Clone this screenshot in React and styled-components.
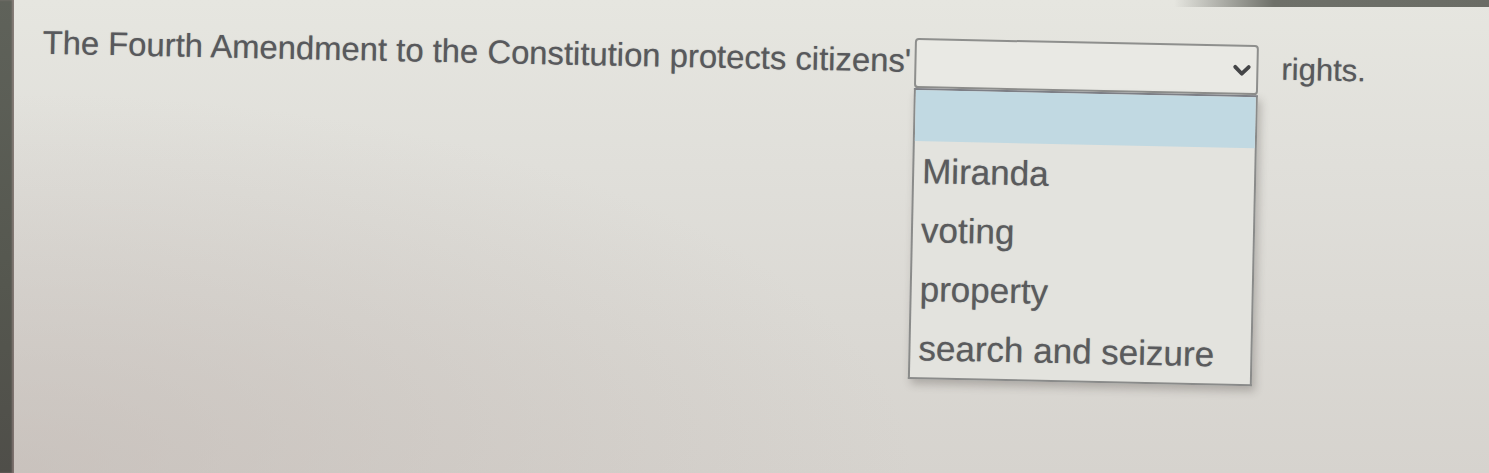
import React from 'react'
import styled, { createGlobalStyle } from 'styled-components'
import { ChevronDown } from 'lucide-react'

const Global = createGlobalStyle`
  html, body {
    margin: 0;
    padding: 0;
    background: #d9d6d1;
  }
  body {
    font-family: "Liberation Sans", Arial, sans-serif;
  }
`

const Page = styled.div`
  display: flex;
  width: 1489px;
  height: 473px;
  overflow: hidden;
`

const Bezel = styled.div`
  flex: 0 0 14px;
  background: linear-gradient(to bottom, #5f625a 0%, #55574f 60%, #4f4e49 100%);
  box-shadow: inset -2px 0 2px rgba(200, 170, 170, 0.4);
`

const Screen = styled.div`
  flex: 1;
  overflow: hidden;
  background:
    linear-gradient(to right, rgba(105, 108, 100, 0) 1160px, #6e7069 1260px, #6a6c65 100%) top / 100% 7px no-repeat,
    radial-gradient(ellipse 900px 380px at 0% 100%, rgba(190, 180, 175, 0.55), rgba(190, 180, 175, 0) 100%),
    linear-gradient(to bottom, #e6e6e0 0%, #e0dfda 35%, #d6d3ce 100%);
`

const Content = styled.div`
  padding: 38px 0 0 29px;
  transform: rotate(1.2deg);
  transform-origin: 901px 38px;
`

const Row = styled.div`
  display: flex;
  align-items: flex-start;
`

const Prompt = styled.span`
  width: 866px;
  margin-right: 6px;
  white-space: nowrap;
  font-size: 32.8px;
  line-height: 50px;
  margin-top: -2px;
  color: #58595c;
  text-shadow: 0 0 1px rgba(90, 90, 95, 0.6);
`

const SelectWrap = styled.div`
  position: relative;
  width: 344px;
`

const SelectBox = styled.div`
  box-sizing: border-box;
  height: 50px;
  border: 2px solid #8e8f8d;
  border-radius: 4px;
  background: #e9e9e4;
  display: flex;
  align-items: center;
  justify-content: flex-end;
  padding-right: 1px;
  color: #444547;
`

const Listbox = styled.ul`
  position: absolute;
  top: 50px;
  left: 0;
  width: 344px;
  box-sizing: border-box;
  margin: 0;
  padding: 0;
  list-style: none;
  background: #e3e3de;
  border: 2px solid #8a8b8a;
  border-top-color: #7d7f86;
  box-shadow: 3px 5px 8px rgba(60, 55, 50, 0.28);
`

const Option = styled.li`
  height: ${p => (p.$blank ? '51px' : '59px')};
  line-height: 59px;
  padding-left: 8px;
  font-size: 35px;
  color: #5a5b5d;
  text-shadow: 0 0 1px rgba(90, 90, 95, 0.6);
  background: ${p => (p.$active ? '#c1d9e2' : 'transparent')};
  white-space: nowrap;
`

const Tail = styled.span`
  margin-left: 23px;
  font-size: 31px;
  line-height: 50px;
  margin-top: -1px;
  color: #58595c;
  text-shadow: 0 0 1px rgba(90, 90, 95, 0.6);
`

const options = ['Miranda', 'voting', 'property', 'search and seizure']

const App = () => (
  <Page>
    <Global />
    <Bezel />
    <Screen>
      <Content>
        <Row>
          <Prompt>The Fourth Amendment to the Constitution protects citizens'</Prompt>
          <SelectWrap>
            <SelectBox>
              <ChevronDown size={27} strokeWidth={3.4} />
            </SelectBox>
            <Listbox>
              <Option $blank $active />
              {options.map(o => (
                <Option key={o}>{o}</Option>
              ))}
            </Listbox>
          </SelectWrap>
          <Tail>rights.</Tail>
        </Row>
      </Content>
    </Screen>
  </Page>
)

export default App
